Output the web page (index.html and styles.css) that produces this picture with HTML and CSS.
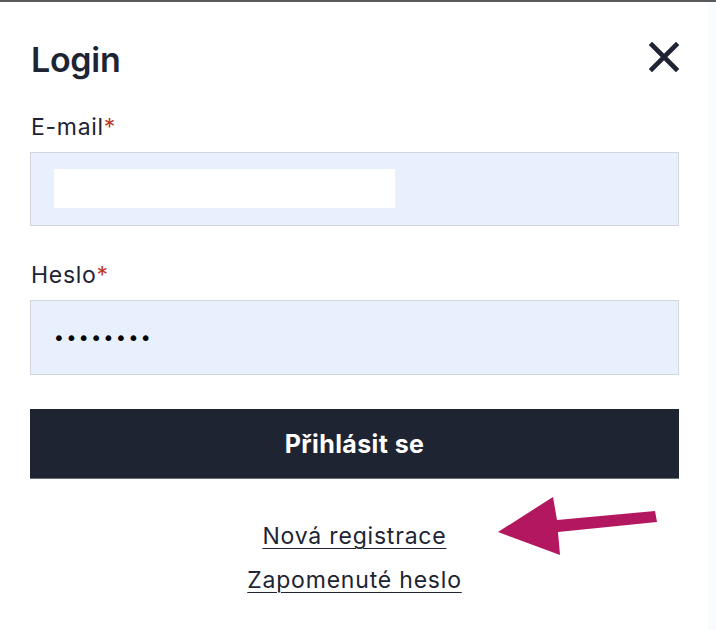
FILE: index.html
```html
<!DOCTYPE html>
<html lang="cs">
<head>
<meta charset="utf-8">
<title>Login</title>
<link rel="stylesheet" href="styles.css">
</head>
<body>
<div class="page">
  <div class="panel">
    <div class="header">
      <h1 class="title">Login</h1>
      <button class="close" aria-label="Zavřít">
        <svg width="32" height="32" viewBox="0 0 32 32"><path d="M4 4 L28 28 M28 4 L4 28" stroke="#1e2433" stroke-width="4.6" stroke-linecap="square" fill="none"/></svg>
      </button>
    </div>
    <label class="label">E-mail<span class="req">*</span></label>
    <div class="field"><span class="redact"></span></div>
    <label class="label label-second">Heslo<span class="req">*</span></label>
    <div class="field field-pass"><span class="dots">••••••••</span></div>
    <button class="submit">Přihlásit se</button>
    <div class="links">
      <a href="#" class="link">Nová registrace</a>
      <a href="#" class="link">Zapomenuté heslo</a>
    </div>
  </div>
  <div class="side"></div>
  <svg class="arrow" width="716" height="630" viewBox="0 0 716 630"><polygon points="553,497 557,520 655,511 657,522 558,532 560,555 498,532" fill="#b3175f"/></svg>
</div>
</body>
</html>
```
FILE: styles.css
```css
html, body {
  margin: 0;
  padding: 0;
  background: #ffffff;
}
.page {
  position: relative;
  display: flex;
  width: 716px;
  height: 630px;
  border-top: 2px solid #5a5a5a;
  box-sizing: border-box;
  font-family: Inter, "Noto Sans", sans-serif;
  color: #1e2433;
}
.panel {
  width: 708px;
  box-sizing: border-box;
  padding: 0 29px 0 30px;
  display: flex;
  flex-direction: column;
}
.side {
  flex: 1;
  background: #f9fbff;
}
.header {
  display: flex;
  justify-content: space-between;
  align-items: flex-start;
  height: 110px;
}
.title {
  margin: 36px 0 0 1px;
  font-size: 34px;
  font-weight: 600;
  line-height: 44px;
  letter-spacing: -0.3px;
}
.close {
  margin: 39px 0 0 0;
  padding: 0;
  border: 0;
  background: none;
  width: 32px;
  height: 32px;
  margin-right: -1px;
}
.close svg { display: block; }
.label {
  font-size: 23px;
  line-height: 30px;
  letter-spacing: 0.7px;
  margin-left: 1px;
  height: 40px;
}
.label-second { margin-top: 34px; height: 40px; }
.req { color: #c0392b; }
.field {
  height: 74px;
  box-sizing: border-box;
  border: 1px solid #d3d6dc;
  background: #e8f0fe;
  display: flex;
  align-items: center;
  padding-left: 23px;
}
.redact {
  width: 341px;
  height: 39px;
  background: #ffffff;
  margin-top: -2px;
}
.field-pass { height: 75px; padding-left: 22px; }
.dots {
  font-family: "DejaVu Sans", sans-serif;
  font-size: 20px;
  letter-spacing: 0.6px;
  color: #000;
}
.submit {
  margin-top: 34px;
  height: 70px;
  border: 0;
  border-bottom: 1px solid #6b6f7a;
  background: #1f2433;
  color: #ffffff;
  font-family: Inter, "Noto Sans", sans-serif;
  font-size: 25px;
  font-weight: 650;
  letter-spacing: 0.4px;
  padding: 0;
}
.links {
  display: flex;
  flex-direction: column;
  align-items: center;
  margin-top: 43px;
  gap: 15px;
}
.link {
  color: #1e2433;
  font-size: 23px;
  line-height: 29px;
  letter-spacing: 0.8px;
  text-decoration: underline;
  text-decoration-thickness: 1px;
  text-underline-offset: 4px;
}
.arrow {
  position: absolute;
  left: 0;
  top: -2px;
  pointer-events: none;
}
```
